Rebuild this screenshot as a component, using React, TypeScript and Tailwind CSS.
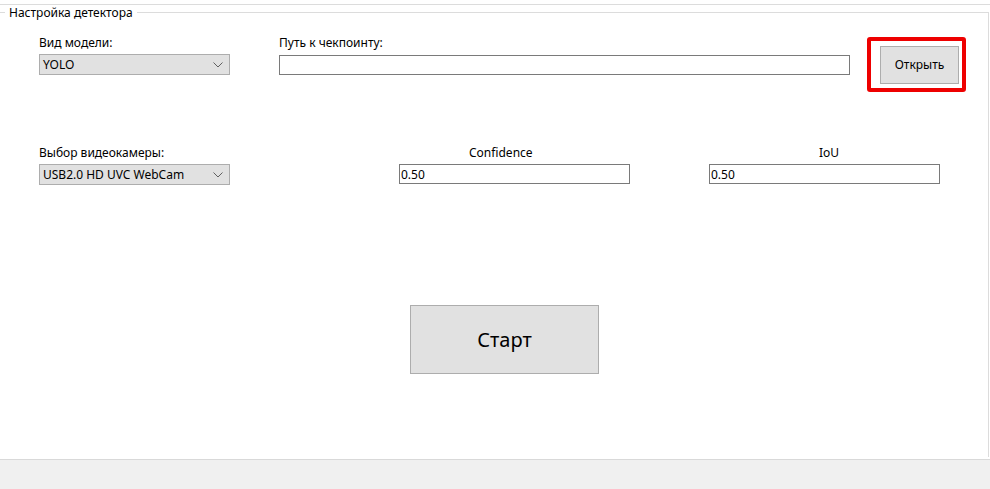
import React from 'react';

const font = { fontFamily: '"Noto Sans", "Liberation Sans", Arial, sans-serif' };

const Chevron: React.FC = () => (
  <svg width="10" height="6" viewBox="0 0 10 6" className="shrink-0">
    <path d="M0.5 0.5 L5 5 L9.5 0.5" fill="none" stroke="#606060" strokeWidth="1" />
  </svg>
);

const Combo: React.FC<{ value: string }> = ({ value }) => (
  <div className="flex h-[21px] w-[191px] items-center justify-between border border-[#adadad] bg-[#e1e1e1] pl-[3px] pr-[6px] text-[12px] text-black">
    <span>{value}</span>
    <Chevron />
  </div>
);

const TextBox: React.FC<{ value?: string; width: string }> = ({ value, width }) => (
  <div className={`flex h-[20px] items-center border border-[#7a7a7a] bg-white pl-[1px] text-[12px] text-black ${width}`}>
    {value}
  </div>
);

const App: React.FC = () => {
  return (
    <div className="flex h-[489px] w-[990px] flex-col overflow-hidden bg-white text-[12px] leading-[15px] text-black" style={font}>
      <div className="h-[4px]" />
      <div className="h-px bg-[#dcdcdc]" />
      <div className="h-[7px]" />

      {/* group box */}
      <div className="relative h-[445px] w-[989px] border-t border-r border-[#dcdcdc]">
        <div className="absolute left-[5px] top-[-8px] bg-white px-[4px]">Настройка детектора</div>

        {/* row 1 */}
        <div className="flex h-[132px] items-start pl-[39px] pt-[22px]">
          <div className="flex w-[191px] flex-col gap-[4px]">
            <span>Вид модели:</span>
            <Combo value="YOLO" />
          </div>
          <div className="ml-[49px] flex flex-col gap-[5px]">
            <span>Путь к чекпоинту:</span>
            <TextBox width="w-[571px]" />
          </div>
          <div className="ml-[17px] mt-[2px] flex h-[55px] w-[99px] items-center rounded-[3px] border-[4px] border-[#ee0000] pl-[9px]">
            <button className="h-[38px] w-[79px] border border-[#adadad] bg-[#e1e1e1] text-[12px] text-black">
              Открыть
            </button>
          </div>
        </div>

        {/* row 2 */}
        <div className="flex items-start pl-[39px]">
          <div className="flex w-[191px] flex-col gap-[4px]">
            <span>Выбор видеокамеры:</span>
            <Combo value="USB2.0 HD UVC WebCam" />
          </div>
          <div className="ml-[169px] flex w-[231px] flex-col gap-[4px]">
            <span className="pl-[70px]">Confidence</span>
            <TextBox value="0.50" width="w-[231px]" />
          </div>
          <div className="ml-[79px] flex w-[231px] flex-col gap-[4px]">
            <span className="pl-[110px]">IoU</span>
            <TextBox value="0.50" width="w-[231px]" />
          </div>
        </div>

        {/* start */}
        <div className="mt-[120px] flex pl-[410px]">
          <button className="h-[69px] w-[189px] border border-[#adadad] bg-[#e1e1e1] text-[20px] text-black">
            Старт
          </button>
        </div>
      </div>

      <div className="flex-1" />
      <div className="h-[30px] border-t border-[#d9d9d9] bg-[#f0f0f0]" />
    </div>
  );
};

export default App;
